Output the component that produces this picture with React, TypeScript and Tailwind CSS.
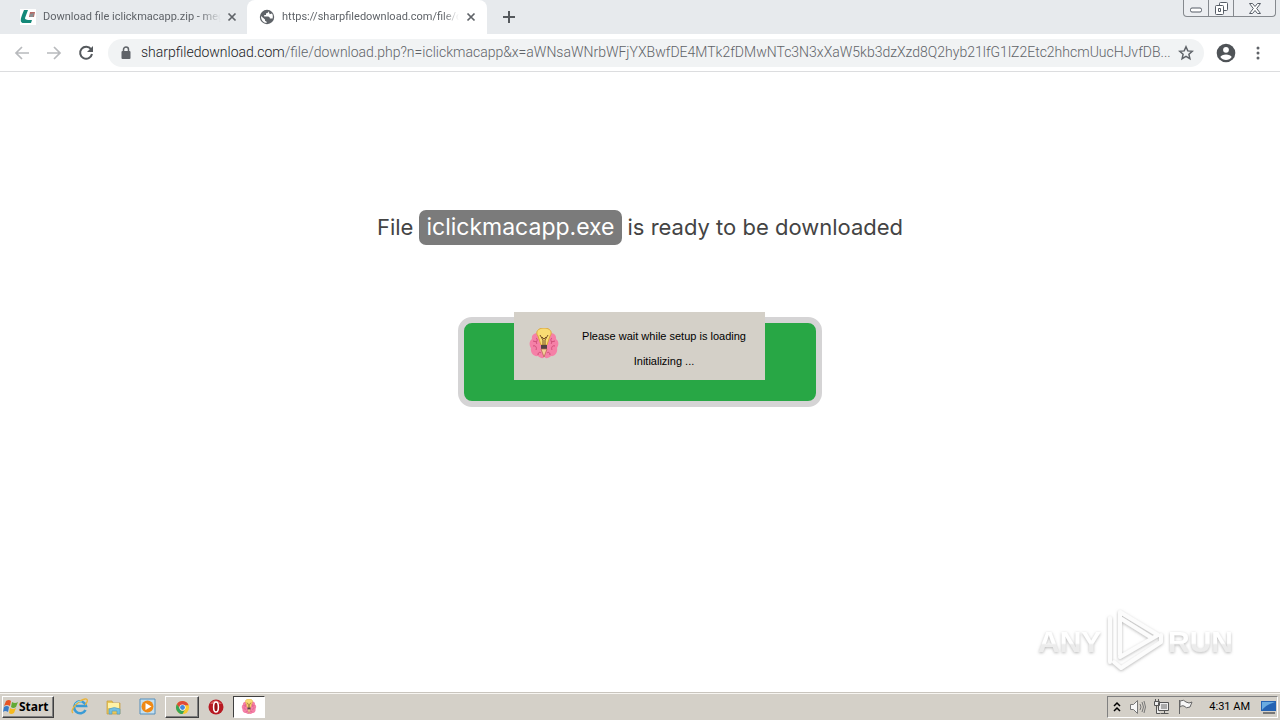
import React from "react";

function SetupIcon({ className }: { className: string }) {
  return (
    <svg viewBox="0 0 30 32" className={className} aria-hidden="true">
      <path d="M11 7C7 3 2 7 3 11-1 14 1 19 2 20c-1 5 3 9 7 8 3 3 7 3 6-1 0 4 4 4 7 1 4 1 7-4 6-8 2-3 2-7-1-9 1-5-5-8-8-4z" fill="#f580a7" />
      <path d="M7 10c3 2-1 4 1 6m-4 2c3-1 4 2 3 4m2 5c0-3 2-3 3-2m11-15c-3 2 1 4-1 6m4 2c-3-1-4 2-3 4m-2 5c0-3-2-3-3-2M4 13l4 1m18-1-4 1" fill="none" stroke="#cf4e78" strokeWidth="1" />
      <path d="M15 0c-6 0-9 4-6 8l3 9h6l3-9c3-4 0-8-6-8z" fill="#f9dc73" stroke="#dda83c" />
      <path d="m11 7 3 5v5m5-10-3 5v5m-3-8 2 2 2-2" fill="none" stroke="#775126" />
      <path d="M12 17h6v4h-6z" fill="#514345" />
      <path d="m12 21 3 8 3-8z" fill="#f4cf99" stroke="#b0654e" strokeWidth=".7" />
    </svg>
  );
}

function CloseIcon() {
  return <svg viewBox="0 0 10 10" className="size-[10px]" aria-hidden="true"><path d="m1.5 1.5 7 7m0-7-7 7" stroke="#5f6368" strokeWidth="1.7" /></svg>;
}

function TabStrip() {
  return (
    <div className="flex h-[34px] bg-[#e7eaed] font-['Roboto',sans-serif] text-[11px] text-[#5f6368]">
      <div className="flex h-full w-[247px] shrink-0 items-center pr-[10px] pl-5">
        <svg viewBox="0 0 16 16" className="size-4 shrink-0" aria-hidden="true">
          <path d="M0 0h16v16H0z" fill="#fff" />
          <path d="M4 1h4L5 9c0 2 3 2 7 2l-1 3H4c-5 0-3-5-2-8z" fill="#138878" />
          <path d="M10 3h5l-1 5H9z" fill="#b76965" /><path d="m10 5 4-1-1 4h-3z" fill="#8b8f91" />
        </svg>
        <span className="ml-[7px] w-[178px] overflow-hidden whitespace-nowrap [mask-image:linear-gradient(to_right,black_88%,transparent)]">Download file iclickmacapp.zip - meg</span>
        <button aria-label="Close tab" className="ml-[6px]"><CloseIcon /></button>
      </div>
      <div className="flex h-full w-[240px] shrink-0 items-center rounded-t-lg bg-white pr-[11px] pl-3">
        <svg viewBox="0 0 16 16" className="size-4 shrink-0" aria-hidden="true">
          <circle cx="8" cy="8" r="7.2" fill="#5f6368" />
          <path d="M10 2.400c0 1.500-.8 2.300-2 2.300H7v1.600H5.500V8H9c1 0 1.200.8 1.200 1.600h1.600c.8 0 1.400.5 1.700 1.200a6.300 6.300 0 0 0-1-7.200 6 6 0 0 0-2.500-1.200z" fill="#5f6368" />
          <path d="M9.200 2.200c.2 1.500-.8 2-2.200 2.100V6H5.200v1.500H9c1.400 0 1.900 1 1.900 2h2.700c.5-1.800.3-3.600-.6-5l-2.300.8-.5-1.500z" fill="#fff" />
          <path d="m2 7 4 3.500v1.300l1.600 1V14C4.500 13.800 1.800 11 2 7z" fill="#fff" />
        </svg>
        <span className="ml-[7px] w-[177px] overflow-hidden whitespace-nowrap [mask-image:linear-gradient(to_right,black_91%,transparent)]">https://sharpfiledownload.com/file/d</span>
        <button aria-label="Close tab" className="ml-[7px]"><CloseIcon /></button>
      </div>
      <button aria-label="New tab" className="ml-[15px]"><svg viewBox="0 0 14 14" className="size-[14px]" aria-hidden="true"><path d="M7 1v12M1 7h12" stroke="#55595d" strokeWidth="2" /></svg></button>
      <div className="mr-1 ml-auto flex h-[17px] w-[93px] rounded-b-[4px] border border-t-0 border-[#85898e] bg-[#eceef1]">
        <button aria-label="Minimize" className="flex w-[25px] items-center justify-center border-r border-[#85898e]">
          <svg viewBox="0 0 12 6" className="mt-1 h-[6px] w-3"><rect x=".5" y="1" width="11" height="4" rx="1.5" fill="#fff" stroke="#565d66" /></svg>
        </button>
        <button aria-label="Restore" className="flex w-[25px] items-center justify-center border-r border-[#85898e]">
          <svg viewBox="0 0 13 13" className="size-[13px]"><g fill="#fff" stroke="#565d66"><rect x="4.5" y=".5" width="8" height="8" rx="1" /><rect x=".5" y="3.5" width="8" height="9" rx="1" /><path d="M3.5 6.5h2v3h-2z" /></g></svg>
        </button>
        <button aria-label="Close" className="flex flex-1 items-center justify-center">
          <svg viewBox="0 0 12 11" className="h-[11px] w-3"><path d="M.5.5h3L6 3.5 8.5.5h3l-3.8 5 3.8 5h-3L6 7.5l-2.5 3h-3l3.8-5z" fill="#fff" stroke="#565d66" /></svg>
        </button>
      </div>
    </div>
  );
}

function Toolbar() {
  return (
    <div className="flex h-[38px] items-center border-b border-[#dcdddf] bg-white pr-[14px] pl-[14px]">
      <button aria-label="Back"><svg viewBox="0 0 16 16" className="size-4" fill="none" stroke="#b8babd" strokeWidth="1.7"><path d="M15 8H2m6-6L2 8l6 6" /></svg></button>
      <button aria-label="Forward" className="ml-4"><svg viewBox="0 0 16 16" className="size-4" fill="none" stroke="#b8babd" strokeWidth="1.7"><path d="M1 8h13M8 2l6 6-6 6" /></svg></button>
      <button aria-label="Reload" className="ml-4"><svg viewBox="0 0 16 16" className="size-4"><path d="M13 4.2A6 6 0 1 0 14 9" fill="none" stroke="#55595d" strokeWidth="2" /><path d="M15 1v6H9z" fill="#55595d" /></svg></button>
      <div className="ml-[14px] flex h-7 min-w-0 flex-1 items-center rounded-full bg-[#f1f3f4] pr-[10px] pl-[13px]">
        <svg viewBox="0 0 10 14" className="h-[14px] w-[10px] shrink-0" aria-hidden="true"><rect x=".5" y="5" width="9" height="8" rx="1" fill="#5f6368" /><path d="M2.5 5V3.5a2.5 2.5 0 0 1 5 0V5" fill="none" stroke="#5f6368" strokeWidth="1.5" /></svg>
        <div className="ml-[10px] min-w-0 flex-1 overflow-hidden font-['Roboto',sans-serif] text-[14px] font-light whitespace-nowrap text-[#5f6368]"><span className="text-[#202124]">sharpfiledownload.com</span>/file/download.php?n=iclickmacapp&amp;x=aWNsaWNrbWFjYXBwfDE4MTk2fDMwNTc3N3xXaW5kb3dzXzd8Q2hyb21lfG1lZ2Etc2hhcmUucHJvfDB...</div>
        <button aria-label="Bookmark this page"><svg viewBox="0 0 16 16" className="size-4"><path d="m8 1.8 1.8 4.1 4.5.4-3.4 3 1 4.4L8 11.4l-3.9 2.3 1-4.4-3.4-3 4.5-.4z" fill="none" stroke="#5f6368" strokeWidth="1.5" /></svg></button>
      </div>
      <button aria-label="Profile" className="ml-3"><svg viewBox="0 0 20 20" className="size-5"><circle cx="10" cy="10" r="9.3" fill="#4f5357" /><circle cx="10" cy="6.8" r="2.9" fill="#fff" /><path d="M4.3 14c1-3.5 10.4-3.5 11.4 0-2.3 4-9 4-11.4 0z" fill="#fff" /></svg></button>
      <button aria-label="Menu" className="ml-[14px]"><svg viewBox="0 0 16 16" className="size-4" fill="#5f6368"><circle cx="8" cy="3" r="1.5" /><circle cx="8" cy="8" r="1.5" /><circle cx="8" cy="13" r="1.5" /></svg></button>
    </div>
  );
}

function Watermark() {
  return (
    <svg viewBox="0 0 208 72" className="absolute right-10 bottom-4 h-[72px] w-[208px]" role="img" aria-label="ANY RUN">
      <defs>
        <linearGradient id="mark" x2="0" y2="1"><stop offset="0" stopColor="#fff" /><stop offset=".55" stopColor="#fff" /><stop offset=".6" stopColor="#ececec" /><stop offset="1" stopColor="#ececec" /></linearGradient>
        <filter id="shade"><feDropShadow dx="0" dy="1" stdDeviation="1.5" floodColor="#999" floodOpacity=".7" /></filter>
      </defs>
      <g filter="url(#shade)">
        <g fill="none" stroke="#fcfcfc" strokeWidth="4" strokeLinejoin="round" strokeLinecap="round"><path d="M88 50V7l38 23-38 22M78 13v44M88 13l32 20M82 57l7 6 40-26v-7" /></g>
        <g fill="url(#mark)" fontFamily="'Liberation Sans', sans-serif" fontWeight="700" fontSize="30"><text x="6" y="47">ANY</text><text x="136" y="47">RUN</text></g>
      </g>
    </svg>
  );
}

function Taskbar() {
  const launch = "flex h-[22px] w-[34px] items-center justify-center";
  return (
    <footer className="flex h-[27px] shrink-0 items-center border-t border-[#f7f5f1] bg-[#d4d0c8] font-['Roboto',sans-serif] text-[11px] text-black shadow-[0_-1px_0_#c9c5be]">
      <button className="ml-[2px] flex h-[22px] w-[52px] items-center border border-t-white border-r-[#404040] border-b-[#404040] border-l-white font-['Noto_Sans',sans-serif] text-[12px] font-bold shadow-[inset_-1px_-1px_#808080]">
        <svg viewBox="0 0 16 16" className="size-4 shrink-0" aria-hidden="true"><path d="M3 2q3-2 5 0L7 7Q4 5 1 7z" fill="#e75424" /><path d="M9 3q3 2 6 0l-2 5q-3 2-5 0z" fill="#62aa35" /><path d="M1 8q3-2 5 0l-1 5q-3-2-5 0z" fill="#397bc7" /><path d="M7 9q3 2 6 0l-2 5q-3 2-5 0z" fill="#f5b91e" /></svg>Start
      </button>
      <button aria-label="Internet Explorer" className={`${launch} ml-[9px]`}><svg viewBox="0 0 18 18" className="size-[18px]"><path d="M14.5 12A6 6 0 1 1 15 8H5" fill="none" stroke="#3a9bd5" strokeWidth="2.6" /><path d="M2 15C-2 12 8 2 14 1c4-.5 2 4 0 6" fill="none" stroke="#eab43a" strokeWidth="1.3" /><path d="M4 6q3-4 7-2" stroke="#8bd8f4" fill="none" /></svg></button>
      <button aria-label="Windows Explorer" className={launch}><svg viewBox="0 0 18 18" className="size-[18px]"><path d="M2 3h5l1 2h7v11H2z" fill="#e9c759" stroke="#c69b38" strokeWidth=".7" /><path d="M3 5h11v5H3z" fill="#fff2a6" /><path d="M4 16v-5q5-3 11 0v5h-3v-3H7v3z" fill="#73bfe0" stroke="#4b9bc4" strokeWidth=".6" /></svg></button>
      <button aria-label="Media Player" className={launch}><svg viewBox="0 0 18 18" className="size-[18px]"><path d="M1 1h15v15H1z" fill="#c4dfef" stroke="#548fbc" /><circle cx="8.5" cy="8.5" r="6" fill="#ef8915" /><path d="m6.5 5 6 3.5-6 3.5z" fill="#fff" /></svg></button>
      <button aria-label="Chrome" className={`${launch} border border-t-white border-r-[#404040] border-b-[#404040] border-l-white shadow-[inset_-1px_-1px_#808080]`}><svg viewBox="0 0 16 16" className="size-[15px]"><circle cx="8" cy="8" r="7" fill="#fac92d" /><path d="M2 4.5a7 7 0 0 1 12.5 1H8a3 3 0 0 0-2.7 4.1z" fill="#df493a" /><path d="M2 4.5A7 7 0 0 0 8 15l3-5.300A3 3 0 0 1 5.300 9z" fill="#36a558" /><circle cx="8" cy="8" r="3.3" fill="#fff" /><circle cx="8" cy="8" r="2.6" fill="#4388db" /></svg></button>
      <button aria-label="Opera" className={launch}><svg viewBox="0 0 16 16" className="size-4"><circle cx="8" cy="8" r="7.500" fill="#b71922" /><path d="M2 5q5-7 12 0" fill="#d95b5d" /><ellipse cx="8" cy="8" rx="2.4" ry="5" fill="#981015" stroke="#fff" strokeWidth="1.5" /></svg></button>
      <button aria-label="Setup" className="flex h-[22px] w-8 items-center justify-center border border-t-[#404040] border-r-white border-b-white border-l-[#404040] bg-white"><SetupIcon className="size-4" /></button>
      <div className="mr-[2px] ml-auto flex h-[22px] items-center border border-t-[#808080] border-r-white border-b-white border-l-[#808080] pl-[5px]">
        <button aria-label="Show hidden icons"><svg viewBox="0 0 8 12" className="h-3 w-2" fill="none" stroke="#000" strokeWidth="1.5"><path d="m1 5 3-3 3 3M1 10l3-3 3 3" /></svg></button>
        <svg viewBox="0 0 18 16" className="ml-2 h-4 w-[18px]" fill="none" stroke="#777"><path d="M1.5 5.5h3l4-4v13l-4-4h-3z" fill="#f7f7f7" /><path d="M11 5q2 3 0 6m2-8q3 5 0 10m2-11q3 6 0 12" /></svg>
        <svg viewBox="0 0 18 16" className="ml-[6px] h-4 w-[18px]" fill="#eee" stroke="#555"><path d="M5.500 3.500h10v8h-10zM7.500 14.500h8M11.500 12v2M1.500 2.500h5v4h-5zM2.500 0v2m3-2v2M3.500 7v7.500H7" /><path d="M8 5h6v5H8z" fill="#aaa" stroke="none" /></svg>
        <svg viewBox="0 0 18 16" className="ml-[6px] h-4 w-[18px]" fill="#f7f7f7" stroke="#666"><path d="M2.500 1v14M3 2q4-2 6 1 3 2 6 0l-2 5q-4 2-6-1-2-1-4 1z" /></svg>
        <time className="ml-[14px] whitespace-nowrap">4:31 AM</time>
        <button aria-label="Show desktop" className="ml-[10px]"><svg viewBox="0 0 17 16" className="h-4 w-[17px]"><path d="M1 2h15v10H1z" fill="#2463b3" /><path d="M2 3h13Q6 6 2 11z" fill="#6aace1" /><path d="M3 13h12v2H3z" fill="#777" /></svg></button>
      </div>
    </footer>
  );
}

export default function App() {
  return (
    <div className="flex min-h-screen flex-col bg-white">
      <header><TabStrip /><Toolbar /></header>
      <main className="relative flex flex-1 flex-col items-center pt-[138px]">
        <h1 className="flex items-center gap-[6px] font-['Inter',sans-serif] text-[22px] leading-[35px] font-normal whitespace-nowrap text-[#444]">File <span className="rounded-[7px] bg-[#7b7b7b] px-[7px] text-[23px] text-white">iclickmacapp.exe</span> is ready to be downloaded</h1>
        <div className="relative mt-[72px]">
          <button aria-label="Download" className="block h-[90px] w-[364px] rounded-[14px] border-[6px] border-[#d5d4d5] bg-[#28a745]" />
          <div role="dialog" aria-label="Setup" className="absolute top-[-5px] left-14 flex h-[68px] w-[251px] items-center bg-[#d4d0c8] pl-[15px] font-['Liberation_Sans',sans-serif] text-[11px] text-black">
            <SetupIcon className="mb-1 h-8 w-[30px] shrink-0" />
            <div className="flex flex-1 flex-col items-center gap-[9px] pt-1 pl-1 leading-4 whitespace-nowrap"><p>Please wait while setup is loading</p><p>Initializing ...</p></div>
          </div>
        </div>
        <Watermark />
      </main>
      <Taskbar />
    </div>
  );
}
